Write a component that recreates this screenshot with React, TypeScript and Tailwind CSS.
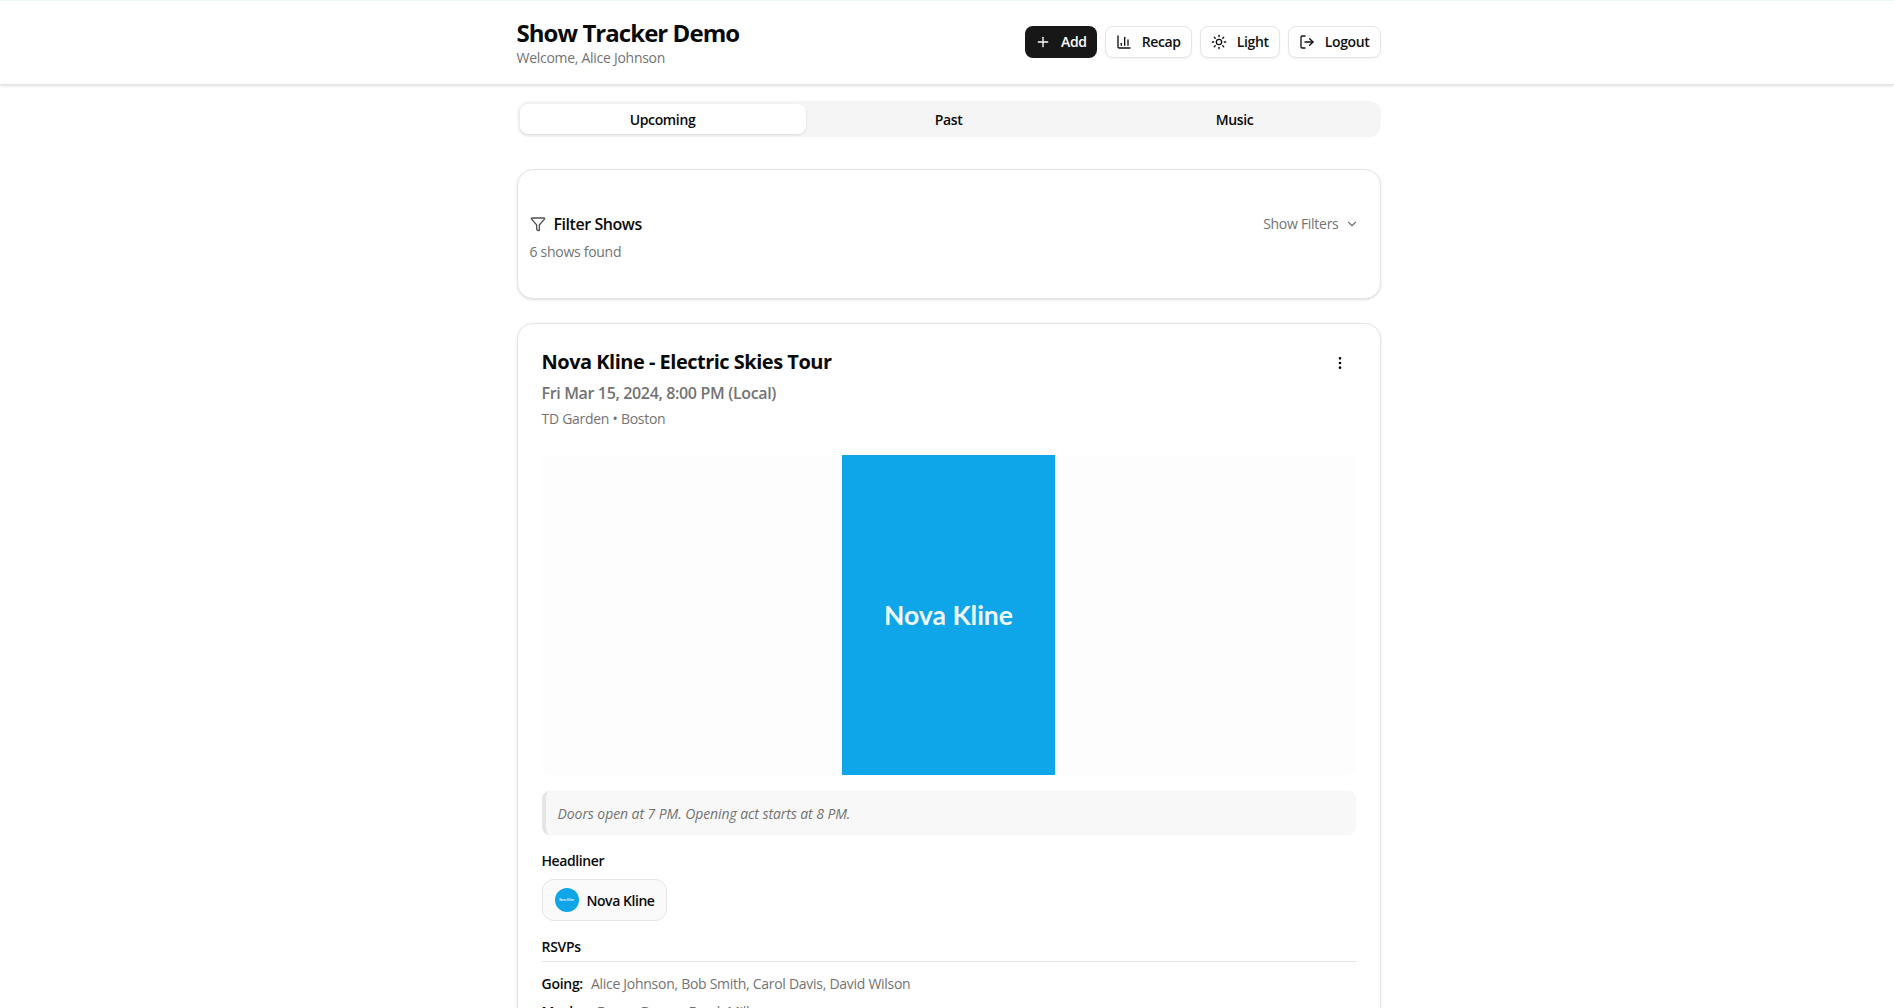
import { BarChart3, ChevronDown, EllipsisVertical, Funnel, LogOut, Plus, Sun } from 'lucide-react';

const HeaderButton = ({ icon, label }: { icon: React.ReactNode; label: string }) => (
  <button className="flex h-8 items-center gap-[10px] rounded-lg border border-[#e5e5e5] bg-white px-[10px] text-[14px] font-semibold tracking-[-0.35px] text-[#111] shadow-xs">
    {icon}
    {label}
  </button>
);

const App = () => {
  return (
    <div className="h-[1008px] overflow-hidden bg-white font-['Open_Sans','Noto_Sans',sans-serif] tracking-[-0.28px] text-[#0a0a0a]">
      <header className="h-[85px] border-t border-b border-t-[#ecfdf9] border-b-[#e5e5e5] bg-white shadow-sm">
        <div className="mx-auto h-full w-[867px] pl-[3px]">
          <div className="flex h-full items-center justify-between">
            <div className="mt-[2px]">
              <h1 className="text-2xl leading-7 font-bold tracking-[-0.95px]">Show Tracker Demo</h1>
              <p className="mt-px text-[14px] leading-5 text-[#737373]">Welcome, Alice Johnson</p>
            </div>
            <div className="-mt-[2px] flex items-center gap-2">
              <button className="flex h-8 items-center gap-[10px] rounded-lg bg-[#171717] px-[10px] text-[14px] font-semibold tracking-[-0.35px] text-white">
                <Plus size={16} />
                Add
              </button>
              <HeaderButton icon={<BarChart3 size={16} />} label="Recap" />
              <HeaderButton icon={<Sun size={16} />} label="Light" />
              <HeaderButton icon={<LogOut size={16} />} label="Logout" />
            </div>
          </div>
        </div>
      </header>

      <main className="mx-auto w-[867px] pt-4 pl-[3px]">
        <div className="grid h-9 grid-cols-3 items-center rounded-xl bg-[#f5f5f5] p-[3px] text-[14px] font-semibold tracking-[-0.35px]">
          <div className="flex h-[30px] items-center justify-center rounded-lg bg-white shadow-sm">Upcoming</div>
          <div className="text-center">Past</div>
          <div className="text-center">Music</div>
        </div>

        <section className="mt-8 flex h-[130px] flex-col justify-center rounded-2xl border border-[#e5e5e5] bg-white px-3 shadow-sm">
          <div className="mt-[5px] flex items-center justify-between pr-[9px]">
            <div className="flex items-center gap-2 text-base font-semibold tracking-[-0.45px]">
              <Funnel size={16} className="text-[#525252]" />
              Filter Shows
            </div>
            <div className="flex items-center gap-[6px] text-[14px] text-[#737373]">
              Show Filters
              <ChevronDown size={14} />
            </div>
          </div>
          <p className="mt-[6px] text-[14px] leading-5 text-[#737373]">6 shows found</p>
        </section>

        <section className="mt-6 rounded-2xl border border-[#e5e5e5] bg-white px-6 pt-6 shadow-sm">
          <div className="flex items-start justify-between">
            <div>
              <h2 className="text-xl leading-7 font-bold tracking-[-0.5px]">Nova Kline - Electric Skies Tour</h2>
              <p className="mt-[5px] text-base leading-6 font-semibold tracking-[-0.35px] text-[#737373]">Fri Mar 15, 2024, 8:00 PM (Local)</p>
              <p className="mt-1 text-[14px] leading-5 text-[#737373]">TD Garden • Boston</p>
            </div>
            <EllipsisVertical size={16} className="mt-[7px] mr-2" />
          </div>

          <div className="mt-[26px] flex h-80 justify-center rounded-lg bg-[#fdfdfd]">
            <div className="flex w-[213px] items-center justify-center bg-[#0ea5e9] pt-[2px] font-['Lato',sans-serif] text-[26.5px] font-bold tracking-normal text-[#f0f9ff]">
              Nova Kline
            </div>
          </div>

          <p className="mt-4 flex h-11 items-center rounded-lg border-l-4 border-[#e5e5e5] bg-[#f8f8f8] px-3 text-[14px] tracking-[-0.08px] text-[#737373] italic">
            Doors open at 7 PM. Opening act starts at 8 PM.
          </p>

          <h3 className="mt-4 text-[14px] leading-5 font-semibold tracking-[-0.4px]">Headliner</h3>
          <div className="mt-2 flex h-[42px] w-fit items-center gap-2 rounded-xl border border-[#e5e5e5] bg-[#fafafa] px-3 text-[14px] font-semibold tracking-[-0.45px]">
            <span className="flex size-6 items-center justify-center rounded-full bg-[#0ea5e9] font-['Lato',sans-serif] text-[3px] leading-none font-bold tracking-normal text-[#f0f9ff]">
              Nova Kline
            </span>
            Nova Kline
          </div>

          <h3 className="mt-4 border-b border-[#e5e5e5] pb-1 text-[14px] leading-5 font-semibold">RSVPs</h3>
          <p className="mt-3 text-[14px] leading-5 text-[#737373]">
            <span className="mr-2 font-semibold text-[#0a0a0a]">Going:</span>
            Alice Johnson, Bob Smith, Carol Davis, David Wilson
          </p>
          <p className="mt-2 text-[14px] leading-5 text-[#737373]">
            <span className="mr-2 font-semibold text-[#0a0a0a]">Maybe:</span>
            Emma Brown, Frank Miller
          </p>
        </section>
      </main>
    </div>
  );
};

export default App;
